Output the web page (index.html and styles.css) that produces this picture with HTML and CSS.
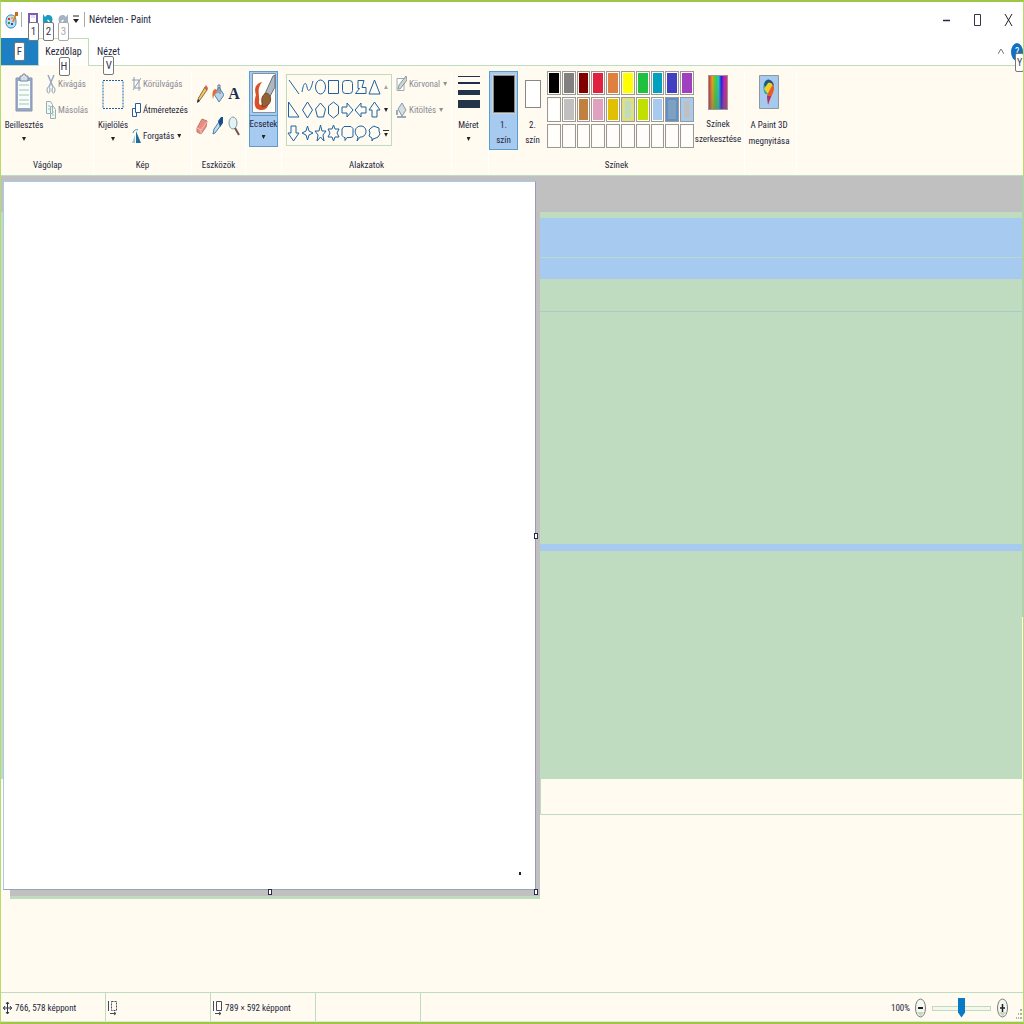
FILE: index.html
```html
<!DOCTYPE html>
<html lang="hu">
<head>
<meta charset="utf-8">
<meta name="viewport" content="width=device-width, initial-scale=1">
<title>Névtelen - Paint</title>
<link rel="stylesheet" href="styles.css">
</head>
<body>
<div class="window">
  <header class="titlebar">
    <svg class="app-icon" width="13" height="18" viewBox="0 0 13 18"><path d="M6 4C2 4 1 7 1 11s2 6 5 6 5-2 5-6-1-7-5-7z" fill="#b9def2" stroke="#3588bd"/><path d="M3 7h2v2H3z" fill="#d33"/><path d="M6 6h2v2H6z" fill="#e8b32b"/><path d="M3 11h2v2H3z" fill="#2a9b4c"/><path d="M6 12h2v2H6z" fill="#3849b3"/><path d="M8 11l3-8" stroke="#e08a2e" stroke-width="2"/><path d="M10 1h3v4h-3z" fill="#c96a1d"/></svg>
    <span class="divider"></span>
    <div class="quick">
      <button class="quick-btn" aria-label="Mentés"><svg width="10" height="14" viewBox="0 0 10 14"><path d="M1 1h8v12H1z" fill="#fff" stroke="#7b5cae" stroke-width="2"/><path d="M3 2h4v3H3z" fill="#ead9f2"/></svg><kbd class="tip">1</kbd></button>
      <button class="quick-btn" aria-label="Visszavonás"><svg width="10" height="14" viewBox="0 0 10 14"><path d="M0 1v9h6L4 7c3-1 3 2 2 6 5-4 5-12-2-11L2 4z" fill="#1a9bc0"/></svg><kbd class="tip">2</kbd></button>
      <button class="quick-btn" aria-label="Ismétlés"><svg width="10" height="14" viewBox="0 0 10 14"><path d="M10 1v9H4l2-3C3 6 3 9 4 13-1 9-1 1 6 2l2 2z" fill="#a4b3c1"/></svg><kbd class="tip muted">3</kbd></button>
    </div>
    <button class="quick-more" aria-label="Testreszabás"><svg width="6" height="9" viewBox="0 0 6 9"><path d="M0 1h6" stroke="#222"/><path d="M0 4h6L3 8z" fill="#222"/></svg></button>
    <span class="divider"></span>
    <h1 class="title">Névtelen - Paint</h1>
    <div class="controls">
      <button aria-label="Kis méret"><svg width="9" height="14" viewBox="0 0 9 14"><path d="M1 7.500h7" stroke="#222a44" stroke-width="1.500"/></svg></button>
      <button aria-label="Teljes méret"><svg width="9" height="14" viewBox="0 0 9 14"><path d="M1.500 1.500h6v11h-6z" fill="none" stroke="#34344a"/></svg></button>
      <button aria-label="Bezárás"><svg width="9" height="14" viewBox="0 0 9 14"><path d="M1 1l7 12M8 1L1 13" stroke="#222"/></svg></button>
    </div>
  </header>

  <nav class="tabs">
    <button class="tab file" aria-label="Fájl"><kbd class="tip inline">F</kbd></button>
    <button class="tab active">Kezdőlap<kbd class="tip">H</kbd></button>
    <button class="tab">Nézet<kbd class="tip">V</kbd></button>
    <div class="tab-tools">
      <button aria-label="Menüszalag összecsukása"><svg width="6" height="7" viewBox="0 0 6 7"><path d="M0 6l3-5 3 5" fill="none" stroke="#777"/></svg></button>
      <button class="help" aria-label="Súgó">?<kbd class="tip">Y</kbd></button>
    </div>
  </nav>

  <main class="ribbon">
    <section class="group clipboard">
      <div class="tools">
        <button class="big"><svg width="18" height="40" viewBox="0 0 18 40"><path d="M1 5h16v33H1z" fill="#9aaac6" stroke="#8393b3"/><path d="M3 8h12v27H3z" fill="#f9fcfa"/><path d="M4 12h10M4 17h10M4 22h10M4 27h10M4 31h10" stroke="#9fc7b5"/><path d="M5 3h2l1-2h2l1 2h2v5H5z" fill="#d5dce6" stroke="#7888a0"/></svg><span>Beillesztés</span><i class="caret"></i></button>
        <div class="stack">
          <button class="row off"><svg width="10" height="20" viewBox="0 0 10 20"><path d="M2 1l5 12M8 1L3 13" stroke="#9baac3" stroke-width="1.500"/><ellipse cx="2.500" cy="16" rx="1.500" ry="3" fill="none" stroke="#91a2b8"/><ellipse cx="7.500" cy="16" rx="1.500" ry="3" fill="none" stroke="#91a2b8"/></svg>Kivágás</button>
          <button class="row off"><svg width="10" height="20" viewBox="0 0 10 20"><path d="M.5 1.500h4l2 3v9h-6zM4.500 6.500h3l2 3v9h-5z" fill="#f3f8f4" stroke="#93b0b5"/><path d="M2 6h2M2 9h2M6 12h2M6 15h2" stroke="#9bbcbc"/></svg>Másolás</button>
        </div>
      </div>
      <h2>Vágólap</h2>
    </section>

    <section class="group image">
      <div class="tools">
        <button class="big"><svg width="22" height="40" viewBox="0 0 22 40"><path d="M1 7.500h20v28H1z" fill="none" stroke="#1764a8" stroke-dasharray="2 1"/></svg><span>Kijelölés</span><i class="caret"></i></button>
        <div class="stack">
          <button class="row off"><svg width="9" height="16" viewBox="0 0 9 16"><path d="M2 1v11h7M0 4h7v11M1 14L9 2" fill="none" stroke="#8d9cb3"/></svg>Körülvágás</button>
          <button class="row"><svg width="9" height="16" viewBox="0 0 9 16"><path d="M3.500 1.500h5v9h-5zM3 6.500H.500v8h4V11" fill="#fff" stroke="#2a5c9c"/></svg>Átméretezés</button>
          <button class="row"><svg width="9" height="16" viewBox="0 0 9 16"><path d="M4 15V3l5 12z" fill="#1e6f9e"/><path d="M3 15V7l-3 8z" fill="#9dc8dc"/><path d="M1 5c1-3 3-4 5-3" fill="none" stroke="#2b8db8"/></svg>Forgatás<i class="caret"></i></button>
        </div>
      </div>
      <h2>Kép</h2>
    </section>

    <section class="group tools-group">
      <div class="tools tool-grid">
        <button aria-label="Ceruza"><svg width="12" height="22" viewBox="0 0 12 22"><path d="M1.500 19l1-4L9 4l2 3-7 10z" fill="#ecc75b" stroke="#8b7447"/><path d="M8 5l2-3 2 3-1 3z" fill="#ce6751"/><path d="M1 20l1-4 2 2z" fill="#252b44"/></svg></button>
        <button aria-label="Kitöltés színnel"><svg width="12" height="22" viewBox="0 0 12 22"><path d="M2 11L7 4l5 8-5 7z" fill="#b8d4ea" stroke="#5c84a8"/><path d="M6 10V2h2v9" fill="none" stroke="#60758e"/><path d="M4 6C0 6 0 12 1 16c1-2 0-4 4-6z" fill="#e26e37"/></svg></button>
        <button class="letter" aria-label="Szöveg">A</button>
        <button aria-label="Radír"><svg width="12" height="22" viewBox="0 0 12 22"><path d="M1 13L6 4l5 2-1 6-5 7-4-2z" fill="#e98e83" stroke="#bf7770"/><path d="M1 13l4 2 6-8M5 14v5" fill="none" stroke="#f7c0b6"/></svg></button>
        <button aria-label="Színválasztó"><svg width="12" height="22" viewBox="0 0 12 22"><path d="M1 19l1-5 5-7 2 3-6 8z" fill="#bbe0f0" stroke="#527ca0"/><path d="M6 6l3-4h2v6l-3 4z" fill="#164f8c"/></svg></button>
        <button aria-label="Nagyító"><svg width="12" height="22" viewBox="0 0 12 22"><ellipse cx="5" cy="8" rx="4" ry="6" fill="#e0f3f7" stroke="#8597a8"/><path d="M7 13l4 7" stroke="#765448" stroke-width="2"/></svg></button>
      </div>
      <h2>Eszközök</h2>
    </section>

    <section class="group brush-group">
      <div class="tools">
        <button class="brush"><svg width="26" height="43" viewBox="0 0 26 43"><path d="M1.500 1.500h23v39h-23z" fill="#fffefa" stroke="#8a8f99"/><path d="M11 10C4 12 3 17 5 23c-2 6-3 16 6 15 4 0 6-3 7-7l-6-1c-1 4-4 4-4 0 1-7-3-12 3-20z" fill="#d94f27"/><path d="M13 24L22 4l2-1v12L17 28z" fill="#aeb8c1" stroke="#68717b"/><path d="M11 26c2-6 6-6 8-2 2 6-1 10-8 11 1-3-1-5 0-9z" fill="#956134" stroke="#75482a"/></svg><span class="brush-text">Ecsetek<i class="caret"></i></span></button>
      </div>
    </section>

    <section class="group shapes-group">
      <div class="tools">
        <div class="shape-box">
          <div class="shapes">
            <button aria-label="Vonal"><svg viewBox="0 0 13 20"><path d="M2 3l10 14"/></svg></button>
            <button aria-label="Görbe"><svg viewBox="0 0 13 20"><path d="M1 15C3 4 5 5 6 10s3 6 6-6"/></svg></button>
            <button aria-label="Ellipszis"><svg viewBox="0 0 13 20"><ellipse cx="6.500" cy="10" rx="5" ry="7"/></svg></button>
            <button aria-label="Téglalap"><svg viewBox="0 0 13 20"><path d="M1.500 3.500h10v13h-10z"/></svg></button>
            <button aria-label="Lekerekített téglalap"><svg viewBox="0 0 13 20"><rect x="1.500" y="3.500" width="10" height="13" rx="3"/></svg></button>
            <button aria-label="Sokszög"><svg viewBox="0 0 13 20"><path d="M4 3.500h6l-2 7h4v6H1.500l4-5H4z"/></svg></button>
            <button aria-label="Háromszög"><svg viewBox="0 0 13 20"><path d="M6.500 3L12 17H1z"/></svg></button>
            <button aria-label="Derékszögű háromszög"><svg viewBox="0 0 13 20"><path d="M1.500 2v15H12z"/></svg></button>
            <button aria-label="Rombusz"><svg viewBox="0 0 13 20"><path d="M6.500 2l5 8-5 8-5-8z"/></svg></button>
            <button aria-label="Ötszög"><svg viewBox="0 0 13 20"><path d="M6.500 3l5 6-2 8h-6l-2-8z"/></svg></button>
            <button aria-label="Hatszög"><svg viewBox="0 0 13 20"><path d="M6.500 2l5 4v8l-5 4-5-4V6z"/></svg></button>
            <button aria-label="Jobbra nyíl"><svg viewBox="0 0 13 20"><path d="M1 7h5V3l6 7-6 7v-4H1z"/></svg></button>
            <button aria-label="Balra nyíl"><svg viewBox="0 0 13 20"><path d="M12 7H7V3l-6 7 6 7v-4h5z"/></svg></button>
            <button aria-label="Felfelé nyíl"><svg viewBox="0 0 13 20"><path d="M4 17v-7H1l5.500-8L12 10H9v7z"/></svg></button>
            <button aria-label="Lefelé nyíl"><svg viewBox="0 0 13 20"><path d="M4 3v7H1l5.500 8L12 10H9V3z"/></svg></button>
            <button aria-label="Négyágú csillag"><svg viewBox="0 0 13 20"><path d="M6.500 3L8 8l4 2-4 2-1.500 5L5 12l-4-2 4-2z"/></svg></button>
            <button aria-label="Ötágú csillag"><svg viewBox="0 0 13 20"><path d="M6.500 2L8 8h4l-3 4 1 6-3.500-4L3 18l1-6-3-4h4z"/></svg></button>
            <button aria-label="Hatágú csillag"><svg viewBox="0 0 13 20"><path d="M6.500 2L8 6h4l-2 4 2 4H8l-1.500 4L5 14H1l2-4-2-4h4z"/></svg></button>
            <button aria-label="Téglalap alakú buborék"><svg viewBox="0 0 13 20"><path d="M3 3.500h7l2 2v8l-2 1H6l-2 3v-3H3l-2-2V6z"/></svg></button>
            <button aria-label="Ovális buborék"><svg viewBox="0 0 13 20"><path d="M4 14C-1 10 1 3 7 3s7 9 1 11H6l-3 4z"/></svg></button>
            <button aria-label="Felhő"><svg viewBox="0 0 13 20"><path d="M3 5l3-2 2 1 3 1v3l1 3-2 3-2 1-3 1-1 2v-3L1 13l1-3-1-3z"/></svg></button>
          </div>
          <div class="scroll">
            <button aria-label="Fel"><i class="caret up"></i></button>
            <button aria-label="Le"><i class="caret"></i></button>
            <button class="all" aria-label="Összes"><i class="caret"></i></button>
          </div>
        </div>
        <div class="stack">
          <button class="row off"><svg width="11" height="20" viewBox="0 0 11 20"><path d="M1 4.500h7v12H1z" fill="#fff" stroke="#a0aab0"/><path d="M2 15l1-4 7-9 1 4-7 9z" fill="#cbd8ce" stroke="#89989c"/></svg>Körvonal<i class="caret"></i></button>
          <button class="row off"><svg width="11" height="20" viewBox="0 0 11 20"><path d="M2 9l4-6 4 7-4 6z" fill="#d5dfe2" stroke="#8798aa"/><path d="M1 10v5M1 17h9" stroke="#9ca9b7" stroke-width="2"/></svg>Kitöltés<i class="caret"></i></button>
        </div>
      </div>
      <h2>Alakzatok</h2>
    </section>

    <section class="group size-group">
      <div class="tools">
        <button class="big"><svg width="22" height="40" viewBox="0 0 22 40"><path d="M0 3.500h22" stroke="#28304f"/><path d="M0 10h22" stroke="#202b4b" stroke-width="2"/><path d="M0 19.500h22" stroke="#21344a" stroke-width="5"/><path d="M0 31h22" stroke="#21344a" stroke-width="8"/></svg><span>Méret</span><i class="caret"></i></button>
      </div>
    </section>

    <section class="group colors-group">
      <div class="tools">
        <button class="color-pick selected"><span class="chip black"></span><span>1.<br>szín</span></button>
        <button class="color-pick"><span class="chip white"></span><span>2.<br>szín</span></button>
        <div class="palette">
          <button class="c-black" aria-label="Fekete"></button><button class="c-gray" aria-label="Szürke"></button><button class="c-maroon" aria-label="Sötétvörös"></button><button class="c-red" aria-label="Vörös"></button><button class="c-orange" aria-label="Narancs"></button><button class="c-yellow" aria-label="Sárga"></button><button class="c-green" aria-label="Zöld"></button><button class="c-teal" aria-label="Türkiz"></button><button class="c-indigo" aria-label="Indigó"></button><button class="c-purple" aria-label="Lila"></button>
          <button class="c-white" aria-label="Fehér"></button><button class="c-silver" aria-label="Világosszürke"></button><button class="c-brown" aria-label="Barna"></button><button class="c-pink" aria-label="Rózsaszín"></button><button class="c-gold" aria-label="Arany"></button><button class="c-cream" aria-label="Halványsárga"></button><button class="c-lime" aria-label="Lime"></button><button class="c-sky" aria-label="Világoskék"></button><button class="c-steel" aria-label="Kékesszürke"></button><button class="c-lavender" aria-label="Levendula"></button>
          <button aria-label="Egyéni 1"></button><button aria-label="Egyéni 2"></button><button aria-label="Egyéni 3"></button><button aria-label="Egyéni 4"></button><button aria-label="Egyéni 5"></button><button aria-label="Egyéni 6"></button><button aria-label="Egyéni 7"></button><button aria-label="Egyéni 8"></button><button aria-label="Egyéni 9"></button><button aria-label="Egyéni 10"></button>
        </div>
        <button class="big edit"><span class="spectrum"></span><span>Színek<br>szerkesztése</span></button>
      </div>
      <h2>Színek</h2>
    </section>

    <section class="group paint3d">
      <div class="tools">
        <button class="big"><svg width="20" height="40" viewBox="0 0 20 40"><path d="M.5 2.500h19v33H.5z" fill="#a6c9ee" stroke="#92979c"/><path d="M10 6c-6 1-7 9-4 15h4z" fill="#29a9bd"/><path d="M5 12C6 5 13 5 15 12l-6 4z" fill="#24557d"/><path d="M9 10c5-2 8 7 4 12l-3 8-1-9-4-5z" fill="#f0cf28"/><path d="M14 11c3 6-1 10-5 20l-1-9z" fill="#e35c2d"/><path d="M8 23l1 9 3-9z" fill="#a92c87"/></svg><span>A Paint 3D<br>megnyitása</span></button>
      </div>
    </section>
  </main>

  <section class="workspace">
    <div class="paper-area">
      <div class="paper"><span class="dot"></span></div>
      <span class="handle east"></span><span class="handle south"></span><span class="handle corner"></span>
    </div>
    <div class="backdrop">
      <div class="band gap"></div>
      <div class="band sky-tall"></div>
      <div class="band sky-short"></div>
      <div class="band leaf-short"></div>
      <div class="band leaf-tall"></div>
      <div class="band sky-thin"></div>
      <div class="band leaf-last"></div>
      <div class="band plain"></div>
    </div>
  </section>

  <footer class="status">
    <div class="cell"><svg width="9" height="14" viewBox="0 0 9 14"><path d="M4.500 1v12M0 7h9M3 3l1.500-2L6 3M3 11l1.500 2L6 11M2 5L.5 7 2 9M7 5l1.500 2L7 9" fill="none" stroke="#2b3350"/></svg>766, 578 képpont</div>
    <div class="cell"><svg width="9" height="16" viewBox="0 0 9 16"><path d="M3.500 1.500h5v9h-5z" fill="none" stroke="#444b62" stroke-dasharray="2 1"/><path d="M.5 1v10M2 13.500h6M6 12l2 1.500L6 15" fill="none" stroke="#444b62"/></svg></div>
    <div class="cell"><svg width="9" height="16" viewBox="0 0 9 16"><path d="M3.500 1.500h5v9h-5zM.5 1v10M2 13.500h6M6 12l2 1.500L6 15" fill="none" stroke="#444b62"/></svg>789 × 592 képpont</div>
    <div class="cell"></div>
    <div class="zoom">
      <label for="zoom">100%</label>
      <button aria-label="Kicsinyítés"><svg width="11" height="20" viewBox="0 0 11 20"><ellipse cx="5.500" cy="10" rx="5" ry="9" fill="#f6f7ef" stroke="#777b7d"/><path d="M2 14h7l-3 4H5z" fill="#c0dcc0"/><path d="M3 10h5" stroke="#222" stroke-width="2"/></svg></button>
      <input id="zoom" type="range" min="0" max="100" value="50">
      <button aria-label="Nagyítás"><svg width="11" height="20" viewBox="0 0 11 20"><ellipse cx="5.500" cy="10" rx="5" ry="9" fill="#f6f7ef" stroke="#777b7d"/><path d="M2 14h7l-3 4H5z" fill="#c0dcc0"/><path d="M3 10h5M5.500 6v8" stroke="#222" stroke-width="1.500"/></svg></button>
      <svg class="grip" width="6" height="10" viewBox="0 0 6 10"><path d="M4 0h2v2H4zM2 4h1v2H2zM4 4h2v2H4zM0 8h1v2H0zM2 8h1v2H2zM4 8h2v2H4z" fill="#a9b3a9"/></svg>
    </div>
  </footer>
</div>
</body>
</html>
```
FILE: styles.css
```css
* { box-sizing: border-box; }

body {
  margin: 0;
  font-family: "Roboto Condensed", "Liberation Sans Narrow", "Liberation Sans", sans-serif;
  font-size: 10px;
  line-height: 16px;
  color: #241f3d;
  background: #fffbf0;
}

button {
  display: flex;
  padding: 0;
  border: 0;
  background: none;
  color: inherit;
  font: inherit;
  align-items: center;
  justify-content: center;
}

svg { flex: none; }
h1, h2 { margin: 0; font-size: inherit; font-weight: 400; }

.window {
  display: flex;
  flex-direction: column;
  min-height: 100vh;
  border: 1px solid #b8da6c;
  border-top: 2px solid #9fc645;
  border-bottom: 2px solid #9fc645;
  overflow: hidden;
}

/* Title bar */
.titlebar {
  display: flex;
  height: 36px;
  padding: 0 10px 1px 4px;
  align-items: center;
  background: #fff;
}
.divider { width: 1px; height: 15px; background: #aaa; }
.app-icon { margin-right: 3px; }
.quick { display: flex; gap: 5px; padding-left: 6px; }
.quick-btn { position: relative; width: 10px; height: 16px; }
.quick-more { margin: 0 5px; }
.title { margin-left: 4px; }
.controls { display: flex; gap: 22px; margin-left: auto; }

.tip {
  position: absolute;
  z-index: 2;
  top: 10px;
  left: 0;
  width: 11px;
  height: 19px;
  border: 1px solid #777;
  border-radius: 2px;
  background: #fff;
  color: #3c3850;
  font: inherit;
  font-size: 11px;
  line-height: 17px;
  text-align: center;
}
.tip.muted { color: #aaa; border-color: #aaa; }

/* Tabs */
.tabs { display: flex; height: 28px; background: #fff; border-bottom: 1px solid #c0dcc0; }
.tab { position: relative; height: 27px; padding: 0 8px; }
.tab .tip { top: 18px; left: 50%; margin-left: -5px; }
.tab.file { width: 37px; background: #1e80c2; }
.tab .tip.inline { position: static; margin: 0; }
.tab.active {
  width: 51px;
  height: 28px;
  padding: 0 0 2px;
  border: 1px solid #c0dcc0;
  border-bottom: 0;
  background: #fffefa;
}
.tab-tools { display: flex; gap: 7px; margin-left: auto; align-items: center; }
.help {
  position: relative;
  width: 12px;
  height: 18px;
  border-radius: 50%;
  background: #1270c0;
  color: #fff;
}
.help .tip { left: 4px; width: 9px; font-size: 10px; }

/* Ribbon */
.ribbon {
  display: flex;
  height: 110px;
  padding: 5px 0 0 1px;
  border-bottom: 1px solid #c0dcc0;
  font-size: 9px;
}
.group {
  display: flex;
  flex: none;
  flex-direction: column;
  height: 102px;
  border-right: 1px solid #fff;
}
.group h2 { margin-top: auto; text-align: center; }
.tools { display: flex; height: 80px; }
.big { flex: none; flex-direction: column; justify-content: flex-start; white-space: nowrap; }
.big svg { margin: 2px 0 4px; }
.stack { display: flex; flex-direction: column; }
.row { justify-content: flex-start; gap: 2px; height: 26px; white-space: nowrap; }
.off { color: #8b8a96; }
.off .caret { opacity: .5; }
.caret {
  flex: none;
  width: 4px;
  height: 4px;
  margin: 0 1px;
  background: #222;
  clip-path: polygon(0 0, 100% 0, 50% 100%);
}
.big .caret { margin-top: 4px; }
.caret.up { opacity: .4; transform: rotate(180deg); }

.clipboard { width: 92px; }
.clipboard .big { width: 44px; }
.image { width: 98px; }
.image .big { width: 38px; }
.tools-group { width: 54px; }
.tool-grid {
  display: grid;
  grid-template-columns: repeat(3, 16px);
  grid-template-rows: 32px 32px;
  padding: 7px 0 0 2px;
}
.letter { font: bold 16px/24px "Liberation Serif", serif; color: #1d2e50; }
.brush-group { width: 36px; }
.brush {
  flex-direction: column;
  justify-content: flex-start;
  width: 29px;
  height: 76px;
  margin-left: 3px;
  border: 1px solid #5b9dcc;
  background: #a6caf0;
}
.brush-text {
  display: flex;
  width: 100%;
  flex-direction: column;
  gap: 3px;
  align-items: center;
  border-top: 1px solid #5b9dcc;
}
.shapes-group { width: 170px; }
.shape-box {
  display: flex;
  flex: none;
  width: 106px;
  height: 72px;
  margin: 3px 4px 0;
  border: 1px solid #c0dcc0;
}
.shapes { display: grid; flex: 1; grid-template-columns: repeat(7, 1fr); }
.shapes svg { width: 13px; height: 20px; fill: none; stroke: #1d62a5; }
.scroll { display: flex; width: 10px; flex-direction: column; justify-content: space-around; }
.scroll button { height: 20px; }
.scroll .all { flex-direction: column; }
.scroll .all::before { content: ""; width: 6px; height: 1px; margin-bottom: 2px; background: #333; }
.size-group { width: 37px; }
.size-group .big { width: 33px; }
.colors-group { width: 256px; }
.color-pick {
  flex: none;
  flex-direction: column;
  justify-content: flex-start;
  width: 29px;
  height: 79px;
  padding-top: 3px;
  border: 1px solid transparent;
}
.color-pick.selected { border-color: #5b9dcc; background: #a6caf0; }
.color-pick span { line-height: 15px; }
.color-pick .chip { height: 38px; margin-bottom: 5px; border: 1px solid #888; }
.chip.black { width: 22px; background: #000; outline: 1px solid #ccd4d4; }
.color-pick .chip.white { width: 16px; height: 28px; margin: 5px 0 10px; background: #fff; }
.palette {
  display: grid;
  flex: none;
  width: 147px;
  height: 77px;
  grid-template-columns: repeat(10, 1fr);
  gap: 2px 1px;
}
.palette button {
  padding: 1px;
  border: 1px solid #999;
  background: #fffefa;
  background-clip: content-box;
}
.palette .c-black { background-color: #000; }
.palette .c-gray { background-color: #808080; }
.palette .c-maroon { background-color: #800000; }
.palette .c-red { background-color: #e02040; }
.palette .c-orange { background-color: #e08040; }
.palette .c-yellow { background-color: #ff0; }
.palette .c-green { background-color: #20c040; }
.palette .c-teal { background-color: #00a0c0; }
.palette .c-indigo { background-color: #4040c0; }
.palette .c-purple { background-color: #a040c0; }
.palette .c-white { background-color: #fff; }
.palette .c-silver { background-color: #c0c0c0; }
.palette .c-brown { background-color: #c08040; }
.palette .c-pink { background-color: #e0a0c0; }
.palette .c-gold { background-color: #e0c000; }
.palette .c-cream { background-color: #c0dcc0; box-shadow: inset 0 0 0 3px #e0e080; }
.palette .c-lime { background-color: #c0e000; }
.palette .c-sky { background-color: #a6caf0; }
.palette .c-steel { background-color: #80a0c0; box-shadow: inset 0 0 0 2px #6090c8; }
.palette .c-lavender { background-color: #c0c0c0; box-shadow: inset 0 0 0 3px #a6caf0; }
.edit { width: 48px; }
.big span { line-height: 15px; }
.big svg + span { line-height: 16px; }
.spectrum {
  width: 20px;
  height: 35px;
  margin: 4px 0 7px;
  border: 1px solid #999;
  background:
    linear-gradient(transparent 20%, #6666 100%),
    linear-gradient(90deg, #d42d44, #e0a022 18%, #32d43a 38%, #28bed2 54%, #2323d5 68%, #b723c8 84%, #e32e55);
}
.paint3d { width: 52px; }
.paint3d .big { width: 48px; }

/* Drawing area */
.workspace { display: flex; flex: 1; min-height: 400px; }
.paper-area {
  position: relative;
  display: flex;
  width: calc(53% - 3px);
  margin: 0 0 93px;
  padding: 5px 4px 9px 2px;
  background:
    linear-gradient(#c0c0c0 36px, #c0dcc0 36px, #c0dcc0 603px, transparent 603px) left top / 2px 100% no-repeat,
    linear-gradient(#c0c0c0, #c0c0c0) right top / 6px calc(100% - 3px) no-repeat,
    linear-gradient(#c0c0c0, #c0c0c0) left top / 100% 6px no-repeat,
    linear-gradient(#c0c0c0, #c0c0c0) 9px calc(100% - 3px) / 100% 6px no-repeat,
    linear-gradient(#c0dcc0, #c0dcc0) 9px 100% / 100% 3px no-repeat;
}
.paper {
  display: flex;
  flex: 1;
  padding: 0 14px 14px 0;
  align-items: flex-end;
  justify-content: flex-end;
  border: 1px solid #a6caf0;
  border-right-color: #9c99b8;
  border-bottom-color: #8fa6bd;
  background: #fff;
}
.dot { width: 2px; height: 3px; background: #222; }
.handle { position: absolute; width: 4px; height: 6px; border: 1px solid #29294a; background: #fff; }
.handle.east { top: 50%; right: 2px; margin-top: -5px; }
.handle.south { bottom: 4px; left: 50%; margin-left: -2px; }
.handle.corner { right: 2px; bottom: 4px; }
.backdrop {
  display: flex;
  flex: 1;
  flex-direction: column;
  padding-right: 1px;
  background: linear-gradient(#a6caf0 441px, transparent 441px) right top / 1px 100% no-repeat;
}
.band { flex: none; }
.gap { height: 42px; background: #c0c0c0; border-bottom: 6px solid #c0dcc0; }
.sky-tall { height: 40px; background: #a6caf0; border-bottom: 1px solid #b8d8d0; }
.sky-short { height: 21px; background: #a6caf0; }
.leaf-short { height: 33px; background: #c0dcc0; border-bottom: 1px solid #a9cbd0; }
.leaf-tall { height: 232px; background: #c0dcc0; }
.sky-thin { height: 7px; background: #a6caf0; }
.leaf-last { height: 228px; background: #c0dcc0; }
.plain { height: 36px; border-bottom: 1px solid #c0dcc0; border-left: 1px solid #c0dcc0; }

/* Status bar */
.status {
  display: flex;
  height: 30px;
  border-top: 1px solid #c0dcc0;
  border-bottom: 1px solid #dcebd0;
  font-size: 9px;
}
.cell {
  display: flex;
  width: 105px;
  padding: 2px 0 0 2px;
  gap: 3px;
  align-items: center;
  border-right: 1px solid #c0dcc0;
  white-space: nowrap;
}
.zoom { display: flex; margin-left: auto; padding: 2px 1px 0 0; align-items: center; }
.zoom label { margin-right: 5px; }
.zoom input { width: 71px; height: 22px; margin: 0; background: none; appearance: none; }
.zoom input::-webkit-slider-runnable-track { height: 5px; margin: 0 6px; border: 1px solid #c0dcc0; background: #f4f8ec; }
.zoom input::-webkit-slider-thumb {
  width: 7px;
  height: 20px;
  margin-top: -9px;
  background: #087bc7;
  clip-path: polygon(0 0, 100% 0, 100% 75%, 50% 100%, 0 75%);
  appearance: none;
}
.grip { align-self: flex-end; margin: 0 0 2px 8px; }
```
